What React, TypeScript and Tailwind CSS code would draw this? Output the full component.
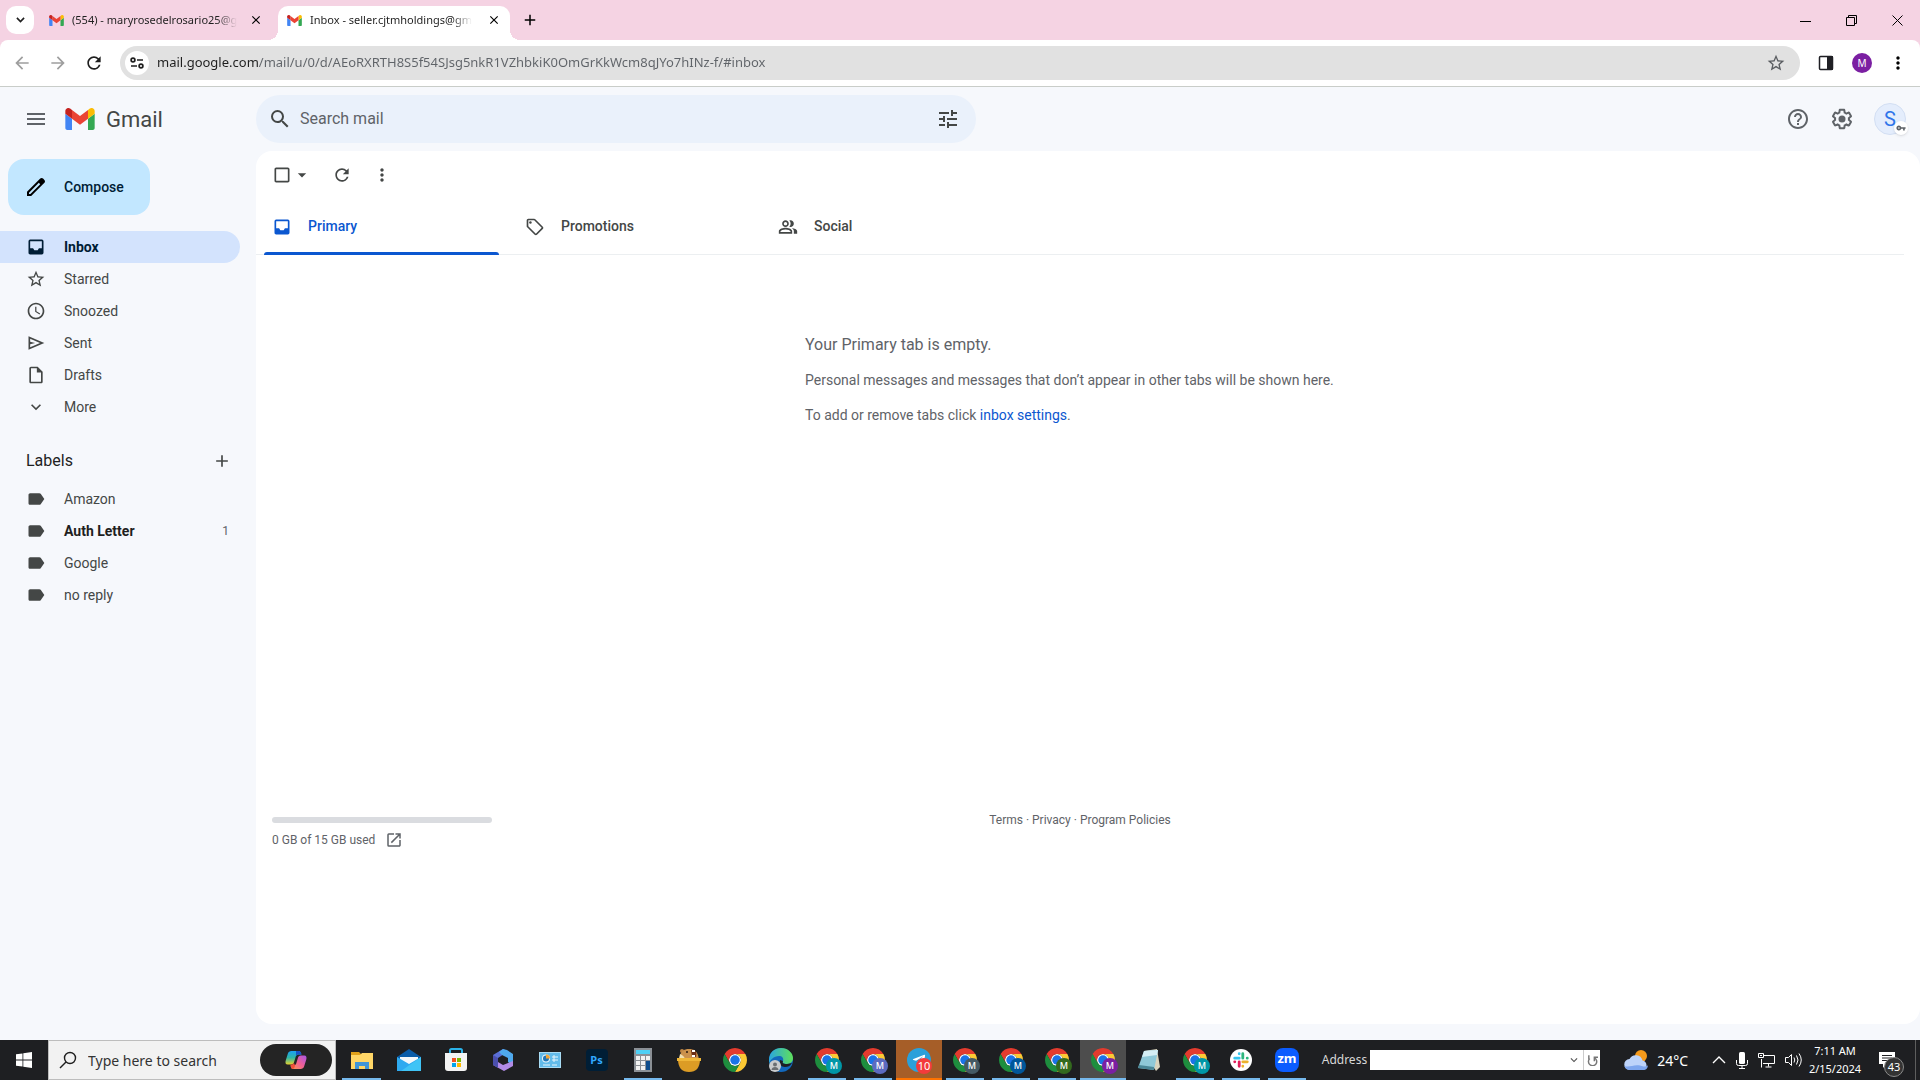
import React from "react";
import {
  MdAccessTime,
  MdAdd,
  MdArrowBack,
  MdArrowDropDown,
  MdArrowForward,
  MdCheckBoxOutlineBlank,
  MdClose,
  MdExpandMore,
  MdHelpOutline,
  MdLabel,
  MdMenu,
  MdMoreVert,
  MdOpenInNew,
  MdOutlineInsertDriveFile,
  MdOutlineLocalOffer,
  MdOutlinePeopleAlt,
  MdRefresh,
  MdSearch,
  MdStarBorder,
  MdTune,
  MdVpnKey,
} from "react-icons/md";
import { FaTelegramPlane } from "react-icons/fa";

function InboxIcon({ className }: { className: string }) {
  return (
    <svg viewBox="0 0 24 24" className={className} fill="currentColor" aria-hidden="true">
      <path d="M19 3H5a2 2 0 0 0-2 2v14c0 1.100.9 2 2 2h14a2 2 0 0 0 2-2V5a2 2 0 0 0-2-2zm0 10.500h-3.500L14 16h-4l-1.500-2.500H5V5h14z" />
    </svg>
  );
}

function SendIcon({ className }: { className: string }) {
  return (
    <svg viewBox="0 0 24 24" className={className} fill="currentColor" aria-hidden="true">
      <path d="M3 20V4l19 8-19 8zm2-3 11.850-5L5 7v3.500l6 1.500-6 1.500V17z" />
    </svg>
  );
}

const NAV = [
  { name: "Starred", icon: MdStarBorder },
  { name: "Snoozed", icon: MdAccessTime },
  { name: "Sent", icon: SendIcon },
  { name: "Drafts", icon: MdOutlineInsertDriveFile },
  { name: "More", icon: MdExpandMore },
];

const LABELS = [
  { name: "Amazon", count: 0 },
  { name: "Auth Letter", count: 1 },
  { name: "Google", count: 0 },
  { name: "no reply", count: 0 },
];

function GmailLogo({ className }: { className: string }) {
  return (
    <svg viewBox="52 42 88 66" className={className} aria-hidden="true">
      <path fill="#4285f4" d="M58 108h14V74L52 59v43c0 3.32 2.69 6 6 6" />
      <path fill="#34a853" d="M120 108h14c3.32 0 6-2.69 6-6V59l-20 15" />
      <path fill="#fbbc04" d="M120 48v26l20-15v-8c0-7.42-8.47-11.65-14.4-7.2" />
      <path fill="#ea4335" d="M72 74V48l24 18 24-18v26L96 92" />
      <path fill="#c5221f" d="M52 51v8l20 15V48l-5.6-4.2c-5.94-4.45-14.4-.22-14.4 7.2" />
    </svg>
  );
}

function ChromeLogo() {
  return (
    <svg viewBox="0 0 48 48" className="size-6" aria-hidden="true">
      <circle cx="24" cy="24" r="12" fill="#fff" />
      <path fill="#e33b2e" d="M24 12h20.78a24 24 0 0 0-41.56 0L13.61 30A11.99 11.99 0 0 1 24 12Z" />
      <path fill="#fcc934" d="M34.39 30 24 48a24 24 0 0 0 20.78-36H24a11.99 11.99 0 0 1 10.39 18Z" />
      <path fill="#1e8e3e" d="M13.61 30 3.22 12A24 24 0 0 0 24 48l10.39-18a11.99 11.99 0 0 1-20.78 0Z" />
      <circle cx="24" cy="24" r="9.5" fill="#1a73e8" />
    </svg>
  );
}

function ChromeProfile({ color }: { color: string }) {
  return (
    <span className="relative">
      <ChromeLogo />
      <span className={`absolute left-[11px] top-[10px] flex size-4 items-center justify-center rounded-full text-[9px] font-medium text-white ${color}`}>
        M
      </span>
    </span>
  );
}

function BrowserTab({ title, active }: { title: string; active?: boolean }) {
  return (
    <div className={`relative flex h-[34px] w-[232px] items-center rounded-t-[10px] pb-[6px] pl-[9px] pr-2 ${active ? "bg-white" : ""}`}>
      {active && (
        <>
          <span className="absolute -left-[10px] bottom-0 size-[10px] bg-[radial-gradient(circle_at_0_0,transparent_10px,white_10px)]" />
          <span className="absolute -right-[10px] bottom-0 size-[10px] bg-[radial-gradient(circle_at_100%_0,transparent_10px,white_10px)]" />
        </>
      )}
      <button className="flex min-w-0 flex-1 items-center">
        <GmailLogo className="h-[11px] w-[15px] shrink-0" />
        <span className="ml-2 whitespace-nowrap text-[11px] text-[#1f1f1f] [mask-image:linear-gradient(to_right,black_88%,transparent)]">
          {title}
        </span>
      </button>
      <button aria-label="Close tab" className="flex size-4 items-center justify-center">
        <MdClose className="size-[14px]" />
      </button>
    </div>
  );
}

function BrowserChrome() {
  return (
    <header className="bg-[#f5d3e3] font-['Noto_Sans','Segoe_UI',sans-serif]">
      <div className="flex h-10 items-end">
        <button aria-label="Search tabs" className="mb-[6px] ml-[6px] flex size-7 items-center justify-center rounded-[10px] bg-white">
          <svg viewBox="0 0 10 6" className="w-[9px]" fill="none" stroke="#1f1f1f" strokeWidth="1.8">
            <path d="m1 1 4 4 4-4" />
          </svg>
        </button>
        <div className="ml-[6px] flex">
          <BrowserTab title="(554) - maryrosedelrosario25@g" />
          <span className="w-[6px]" />
          <BrowserTab title="Inbox - seller.cjtmholdings@gm" active />
        </div>
        <button aria-label="New tab" className="mb-[11px] ml-[11px]">
          <MdAdd className="size-[18px]" />
        </button>
        <div className="mb-[14px] ml-auto mr-[17px] flex items-center gap-[35px] text-black">
          <button aria-label="Minimize">
            <svg viewBox="0 0 11 11" className="size-[11px]" stroke="currentColor"><path d="M0 6.5h11" /></svg>
          </button>
          <button aria-label="Restore">
            <svg viewBox="0 0 11 11" className="size-[11px]" fill="none" stroke="currentColor">
              <path d="M.5 2.5h8v8h-8zM2.5 2.500v-2h8v8h-2" />
            </svg>
          </button>
          <button aria-label="Close">
            <svg viewBox="0 0 11 11" className="size-[11px]" stroke="currentColor"><path d="m.5.5 10 10M10.500.5l-10 10" /></svg>
          </button>
        </div>
      </div>
      <div className="flex h-[47px] items-center rounded-t-lg border-b border-[#c9cdc9] bg-white pl-3">
        <button aria-label="Back" className="w-9 text-[#9e9e9e]"><MdArrowBack className="size-5" /></button>
        <button aria-label="Forward" className="w-9 text-[#9e9e9e]"><MdArrowForward className="size-5" /></button>
        <button aria-label="Reload" className="w-9 text-[#1f1f1f]"><MdRefresh className="size-5" /></button>
        <div className="flex h-[34px] flex-1 items-center rounded-full bg-[#e1e1e1] pl-[5px] pr-[14px]">
          <button aria-label="View site information" className="flex size-6 items-center justify-center rounded-full bg-white">
            <svg viewBox="0 0 14 12" className="w-[14px]" fill="none" stroke="#1f1f1f" strokeWidth="1.7">
              <circle cx="3" cy="3" r="1.900" />
              <path d="M7 3h6M1 9h6" />
              <circle cx="11" cy="9" r="1.900" />
            </svg>
          </button>
          <input
            aria-label="Address bar"
            defaultValue="mail.google.com/mail/u/0/d/AEoRXRTH8S5f54SJsg5nkR1VZhbkiK0OmGrKkWcm8qJYo7hINz-f/#inbox"
            className="ml-2 flex-1 bg-[linear-gradient(to_right,#1f1f1f_101px,#5f6368_101px)] bg-clip-text text-[13px] text-transparent outline-none"
          />
          <button aria-label="Bookmark this tab" className="text-[#5a5d61]"><MdStarBorder className="size-5" /></button>
        </div>
        <button aria-label="Side panel" className="ml-[18px]">
          <svg viewBox="0 0 16 16" className="size-4">
            <rect x="1.500" y="1.500" width="13" height="13" rx="1" fill="none" stroke="#1f1f24" strokeWidth="1.500" />
            <path d="M9 1h6v14H9z" fill="#1f1f24" />
          </svg>
        </button>
        <button aria-label="Profile" className="ml-[18px] flex size-5 items-center justify-center rounded-full bg-[#7b1fa2] text-[10px] text-white">M</button>
        <button aria-label="Browser menu" className="ml-[16px] mr-3"><MdMoreVert className="size-5" /></button>
      </div>
    </header>
  );
}

function GmailHeader() {
  return (
    <div className="flex h-16 items-center">
      <div className="flex w-64 items-center pl-6 text-[#5f6368]">
        <button aria-label="Main menu"><MdMenu className="size-6" /></button>
        <a href="#inbox" className="ml-[17px] flex items-center">
          <GmailLogo className="h-[22px] w-[30px]" />
          <span className="ml-[11px] text-[22px] text-[#444746]">Gmail</span>
        </a>
      </div>
      <form className="flex h-12 w-[720px] items-center rounded-full bg-[#eaf1fb] px-3 text-[#444746]">
        <button type="button" aria-label="Search"><MdSearch className="size-6" /></button>
        <input
          aria-label="Search mail"
          placeholder="Search mail"
          className="ml-2 flex-1 bg-transparent text-[16px] outline-none placeholder:text-[#5f6368]"
        />
        <button type="button" aria-label="Show search options" className="mr-1"><MdTune className="size-6" /></button>
      </form>
      <div className="ml-auto mr-[14px] flex items-center text-[#5f6368]">
        <button aria-label="Support" className="mr-5"><MdHelpOutline className="size-6" /></button>
        <button aria-label="Settings" className="mr-5">
          <svg viewBox="0 0 24 24" className="size-6" fill="currentColor">
            <path d="M13.85 22.25h-3.7c-.74 0-1.36-.54-1.45-1.27l-.27-1.89c-.27-.14-.53-.29-.79-.46l-1.8.72c-.7.26-1.47-.03-1.81-.65L2.2 15.53c-.35-.66-.2-1.44.36-1.88l1.53-1.19c-.01-.15-.02-.3-.02-.46 0-.15.01-.31.02-.46l-1.52-1.19c-.59-.45-.74-1.26-.37-1.88l1.85-3.19c.34-.62 1.11-.9 1.79-.63l1.81.73c.26-.17.52-.32.78-.46l.27-1.91c.09-.7.71-1.25 1.44-1.25h3.7c.74 0 1.36.54 1.45 1.27l.27 1.89c.27.14.53.29.79.46l1.8-.72c.71-.26 1.48.03 1.82.65l1.84 3.18c.36.66.2 1.44-.36 1.88l-1.52 1.19c.01.15.02.3.02.46s-.01.31-.02.46l1.52 1.19c.56.45.72 1.23.37 1.86l-1.86 3.22c-.34.62-1.11.9-1.8.63l-1.8-.72c-.26.17-.52.32-.78.46l-.27 1.91c-.1.68-.72 1.22-1.46 1.22zm-3.23-2h2.76l.37-2.55.53-.22c.44-.18.88-.44 1.34-.78l.45-.34 2.38.96 1.38-2.4-2.03-1.58.07-.56c.03-.26.06-.51.06-.78s-.03-.53-.06-.78l-.07-.56 2.03-1.58-1.39-2.4-2.39.96-.45-.35c-.42-.32-.87-.58-1.33-.77l-.52-.22-.37-2.55h-2.76l-.37 2.55-.53.21c-.44.19-.88.44-1.34.79l-.45.33-2.38-.95-1.39 2.39 2.03 1.58-.07.56a7 7 0 0 0-.06.79c0 .26.02.53.06.78l.07.56-2.03 1.58 1.38 2.4 2.39-.96.45.35c.43.33.86.58 1.33.77l.53.22.38 2.55z" />
            <circle cx="12" cy="12" r="3.500" />
          </svg>
        </button>
        <button aria-label="Account" className="relative flex size-8 items-center justify-center rounded-full border border-[#d3dff3] bg-[#e4edfc] text-[20px] text-[#2f75ea]">
          S
          <span className="absolute left-[19px] top-[17px] flex size-[14px] items-center justify-center rounded-full bg-white text-[#5f6368] shadow">
            <MdVpnKey className="size-[10px]" />
          </span>
        </button>
      </div>
    </div>
  );
}

function Sidebar() {
  return (
    <aside className="w-64 shrink-0 pt-2 text-[14px] text-[#444746]">
      <button className="ml-2 flex h-14 w-[142px] items-center rounded-2xl bg-[#c2e7ff] pl-4 font-medium text-[#001d35]">
        <svg viewBox="0 0 24 24" className="size-6" fill="black">
          <path d="M20.410 4.940l-1.350-1.350c-.78-.78-2.050-.78-2.830 0L3 16.820V21h4.180L20.410 7.770c.79-.78.79-2.050 0-2.830zm-14 14.120L5 19v-1.360l9.820-9.820 1.410 1.410-9.820 9.830z" />
        </svg>
        <span className="ml-4">Compose</span>
      </button>
      <nav className="mt-4 mr-4">
        <a href="#inbox" className="flex h-8 items-center rounded-r-full bg-[#d3e3fd] pl-[26px] font-bold text-[#001d35]">
          <InboxIcon className="size-5" />
          <span className="ml-[18px]">Inbox</span>
        </a>
        {NAV.map(({ name, icon: Icon }) => (
          <a key={name} href={`#${name.toLowerCase()}`} className="flex h-8 items-center pl-[26px]">
            <Icon className="size-5" />
            <span className="ml-[18px]">{name}</span>
          </a>
        ))}
      </nav>
      <div className="mt-4 flex h-11 items-center justify-between pl-[26px] pr-6">
        <h2 className="text-[16px] text-[#1f1f1f]">Labels</h2>
        <button aria-label="Create new label"><MdAdd className="size-5" /></button>
      </div>
      <nav className="mr-4">
        {LABELS.map(({ name, count }) => (
          <a
            key={name}
            href={`#label/${name}`}
            className={`flex h-8 items-center pl-[26px] pr-[11px] ${count ? "font-bold text-[#1f1f1f]" : ""}`}
          >
            <MdLabel className="size-5 text-[#444746]" />
            <span className="ml-[18px]">{name}</span>
            {count > 0 && <span className="ml-auto text-[12px] font-normal text-[#5f6368]">{count}</span>}
          </a>
        ))}
      </nav>
    </aside>
  );
}

function MailPanel() {
  return (
    <main className="flex-1 rounded-2xl bg-white text-[14px] text-[#5f6368]">
      <div className="flex h-12 items-center pl-4 text-[#444746]">
        <button aria-label="Select" className="flex items-center">
          <MdCheckBoxOutlineBlank className="size-5" />
          <MdArrowDropDown className="size-5" />
        </button>
        <button aria-label="Refresh" className="ml-5"><MdRefresh className="size-5" /></button>
        <button aria-label="More" className="ml-5"><MdMoreVert className="size-5" /></button>
      </div>
      <div role="tablist" className="mr-4 flex h-14 border-b border-[#eceff1] pl-2 font-medium text-[#444746]">
        <button role="tab" aria-selected="true" className="relative flex w-[253px] items-center pl-2 text-[#0b57d0]">
          <InboxIcon className="size-5" />
          <span className="ml-4">Primary</span>
          <span className="absolute -bottom-px left-0 h-[3px] w-[235px] rounded-t bg-[#0b57d0]" />
        </button>
        <button role="tab" className="flex w-[253px] items-center pl-2">
          <MdOutlineLocalOffer className="size-5" />
          <span className="ml-4">Promotions</span>
        </button>
        <button role="tab" className="flex w-[253px] items-center pl-2">
          <MdOutlinePeopleAlt className="size-5" />
          <span className="ml-4">Social</span>
        </button>
      </div>
      <section className="mr-4 flex h-[561px] justify-center pt-[78px]">
        <div className="w-[550px]">
          <h2 className="text-[16px] leading-6">Your Primary tab is empty.</h2>
          <p className="mt-[13px] leading-5">Personal messages and messages that don’t appear in other tabs will be shown here.</p>
          <p className="mt-[15px] leading-5">
            To add or remove tabs click <a href="#settings" className="text-[#0b57d0]">inbox settings</a>.
          </p>
        </div>
      </section>
      <footer className="grid grid-cols-3 pl-4 pr-8 text-[12px] leading-4">
        <div>
          <div className="mt-[1px] h-[6px] w-[220px] rounded-full bg-[#dadce0]" />
          <div className="mt-[7px] flex h-5 items-center">
            0 GB of 15 GB used
            <a href="#storage" aria-label="Manage storage" className="ml-[10px]"><MdOpenInNew className="size-[18px]" /></a>
          </div>
        </div>
        <div className="-mt-1 text-center">
          <a href="#terms">Terms</a> · <a href="#privacy">Privacy</a> · <a href="#policies">Program Policies</a>
        </div>
      </footer>
    </main>
  );
}

function Task({ label, className = "w-[46px]", line = "", children }: { label: string; className?: string; line?: string; children: React.ReactNode }) {
  return (
    <button aria-label={label} className={`relative flex h-10 shrink-0 items-center justify-center ${className}`}>
      {children}
      {line && <span className={`absolute bottom-0 h-[2px] ${line}`} />}
    </button>
  );
}

const RUNNING = "inset-x-1 bg-[#76b9ed]";

function CopilotIcon() {
  return (
    <svg viewBox="0 0 24 22" className="h-5 w-[22px]">
      <defs>
        <linearGradient id="copA" x1="0" y1="0" x2="0" y2="1">
          <stop offset="0" stopColor="#1aa0f5" /><stop offset=".5" stopColor="#2fb5a5" /><stop offset="1" stopColor="#e8d22c" />
        </linearGradient>
        <linearGradient id="copB" x1="1" y1="0" x2="0" y2="1">
          <stop offset="0" stopColor="#a556e8" /><stop offset=".5" stopColor="#ef5f95" /><stop offset="1" stopColor="#fb9a4b" />
        </linearGradient>
      </defs>
      <path d="M7 1h8c2 0 2.500 2 3 4h-3c-2 0-3 1-3.500 3L10 13c-.5 2-1.500 3-3.500 3H3c-2.500 0-3-2-2.300-4.500L3 4c.6-2 2-3 4-3z" fill="url(#copA)" />
      <path d="M12 1h3c2 0 2.500 2 3 4h-3c-1.500 0-2.500.5-3 2z" fill="#1551c9" />
      <path d="M17 21H9c-2 0-2.500-2-3-4h3c2 0 3-1 3.500-3L14 9c.5-2 1.500-3 3.500-3H21c2.500 0 3 2 2.300 4.500L21 18c-.6 2-2 3-4 3z" fill="url(#copB)" />
      <path d="M6 16c2 0 3-.4 3.600-2L11 17c-.6 2-1 4-3 4-1.500-.5-1.800-2-2-5z" fill="#f2503b" />
    </svg>
  );
}

function Taskbar() {
  return (
    <footer className="flex h-10 items-center bg-[#1e1f22] font-['Noto_Sans','Segoe_UI',sans-serif] text-white">
      <Task label="Start" className="w-12">
        <svg viewBox="0 0 16 16" className="size-4" fill="white">
          <path d="M0 2.300 6.500 1.400v6.200H0zM7.300 1.300 16 0v7.600H7.300zM0 8.400h6.500v6.200L0 13.700zM7.300 8.400H16V16l-8.700-1.300z" />
        </svg>
      </Task>
      <div className="flex h-10 w-72 items-center border border-[#bdbdbd] bg-[#f2f2f2] pl-[10px] pr-[3px]">
        <svg viewBox="0 0 18 18" className="size-[18px]" fill="none" stroke="#1f1f1f" strokeWidth="1.400">
          <circle cx="11" cy="7" r="5.500" />
          <path d="m7 11-6 6" />
        </svg>
        <input
          aria-label="Type here to search"
          placeholder="Type here to search"
          className="ml-[11px] w-[160px] bg-transparent text-[14px] outline-none placeholder:text-[#333333]"
        />
        <button aria-label="Copilot" className="ml-auto flex h-8 w-[72px] items-center justify-center rounded-full bg-[#242424]"><CopilotIcon /></button>
      </div>
      <div className="ml-[2px] flex">
        <Task label="File Explorer" className="w-[47px]" line={RUNNING}>
          <svg viewBox="0 0 22 18" className="w-[22px]">
            <path d="M0 1h8l2 2v3H0z" fill="#e0a11b" />
            <path d="M0 4h9l2-2h11v16H0z" fill="#ffd667" />
            <path d="M4 18v-7h14v7h-4v-3H8v3z" fill="#3f95d8" />
          </svg>
        </Task>
        <Task label="Mail" className="w-[47px]">
          <svg viewBox="0 0 24 22" className="w-6">
            <path d="M0 8 12 0l12 8v4H0z" fill="#0a5ca8" />
            <path d="M3 8h18v8H3z" fill="#f4f8fb" />
            <path d="m0 8 12 7 12-7v14H0z" fill="#2eaaf0" />
            <path d="m24 8-20 14h20z" fill="#40c4f6" />
          </svg>
        </Task>
        <Task label="Microsoft Store" className="w-[47px]">
          <svg viewBox="0 0 24 24" className="w-6">
            <path d="M6 6V2.500C6 1.500 6.500 1 7.500 1h9c1 0 1.500.5 1.500 1.500V6" fill="none" stroke="#2bb3ea" strokeWidth="2" />
            <path d="M1 5h22v15a3 3 0 0 1-3 3H4a3 3 0 0 1-3-3z" fill="#f3f3f3" />
            <path d="M8 10h4v4H8z" fill="#f25022" /><path d="M13 10h4v4h-4z" fill="#7fba00" />
            <path d="M8 15h4v4H8z" fill="#00a4ef" /><path d="M13 15h4v4h-4z" fill="#ffb900" />
          </svg>
        </Task>
        <Task label="Microsoft 365" className="w-[47px]">
          <svg viewBox="0 0 20 22" className="w-5">
            <path d="M10 0 0 6v10l5-3V9l6-4 3-3z" fill="#5b6fd6" />
            <path d="m10 0 4 1 6 4v12l-5-4V9L9 6 6 3z" fill="#4fa9ee" />
            <path d="M0 16l5-3 5 3 10-4v5l-9 5z" fill="#b18be6" />
            <path d="M0 6v10l5 3V9z" fill="#4b4fae" />
          </svg>
        </Task>
        <Task label="Control Panel" className="w-[47px]">
          <svg viewBox="0 0 22 16" className="w-[22px]">
            <path d="M0 0h22v16H0z" fill="#a9dcf5" />
            <path d="M1 1h20v14H1z" fill="#63bbea" />
            <circle cx="7" cy="6.500" r="4" fill="#e9f5fb" /><circle cx="7" cy="6.500" r="3" fill="#2277b8" /><path d="M7 6.500v-4a4 4 0 0 1 4 4z" fill="#f0a63a" />
            <path d="M13 5h6M13 8h6M15 3v7M4 13h7M13 13h5" stroke="#e9f5fb" strokeWidth="1" />
          </svg>
        </Task>
        <Task label="Photoshop" className="w-[47px]">
          <span className="flex size-[22px] items-center justify-center rounded bg-[#001e36] text-[11px] font-bold text-[#31a8ff]">Ps</span>
        </Task>
        <Task label="Calculator" line={RUNNING}>
          <svg viewBox="0 0 18 24" className="w-[18px]">
            <path d="M0 0h18v24H0z" fill="#8b9096" />
            <path d="M2 2h14v4H2z" fill="#4fd0f5" />
            <path d="M2 8h4v4H2zM7 8h4v4H7zM12 8h4v4h-4zM2 13h4v4H2zM7 13h4v4H7zM2 18h4v4H2zM7 18h4v4H7z" fill="#f2f2f2" />
            <path d="M12 13h4v9h-4z" fill="#0e4c8c" />
          </svg>
        </Task>
        <Task label="Game">
          <svg viewBox="0 0 24 24" className="size-6">
            <circle cx="5" cy="3" r="2" fill="#c08644" />
            <path d="M2 12C3 3 7 1 12 1s9 2 10 11z" fill="#cb914c" />
            <path d="M3 6c2 1 4 2 5 5H2z" fill="#f1dfae" />
            <path d="M14 2c5-1 6 3 5 7h-4z" fill="#6a2c16" /><path d="M15 2h3v2h-3zM15 7h3v2h-3z" fill="#fff" />
            <circle cx="10" cy="4" r="1" fill="#2b1a0e" />
            <path d="M1 11h22c0 9-4 13-11 13S1 20 1 11z" fill="#dc9c25" />
            <path d="M0 10h24v3H0z" fill="#efb638" />
          </svg>
        </Task>
        <Task label="Chrome"><ChromeLogo /></Task>
        <Task label="Edge">
          <svg viewBox="0 0 24 24" className="size-6">
            <defs>
              <linearGradient id="edgeTop" x1="0" x2="1">
                <stop offset="0" stopColor="#2aa5e0" /><stop offset="1" stopColor="#5fe05a" />
              </linearGradient>
            </defs>
            <circle cx="12" cy="12" r="12" fill="#1268bd" />
            <path d="M0 12C0 4 6 0 12 0c7 0 12 5 12 10 0 4-3 6-6 6-4 0-5-1-4-3 1-3-1-5-4-5-5 0-10 4-10 9z" fill="url(#edgeTop)" />
            <path d="M14 13c-1 2 0 3 4 3l5-1c-2 3-4 4-7 4-4 0-6-3-5-7z" fill="#1e1f22" />
            <circle cx="6" cy="18" r="6" fill="#c9cbcd" />
            <circle cx="6" cy="16.500" r="2" fill="#6b6e72" />
            <path d="M2.500 22c0-4 7-4 7 0z" fill="#6b6e72" />
          </svg>
        </Task>
        <Task label="Chrome profile 1" line={RUNNING}><ChromeProfile color="bg-[#0097a7]" /></Task>
        <Task label="Chrome profile 2" line={RUNNING}><ChromeProfile color="bg-[#5c6bc0]" /></Task>
        <Task label="Telegram" className="w-[46px] bg-[#a65e28]" line="inset-x-0 bg-[#ff7300]">
          <span className="relative flex size-6 items-center justify-center rounded-full bg-[#2ba0da]">
            <FaTelegramPlane className="size-[14px]" />
            <span className="absolute left-[9px] top-[10px] flex size-4 items-center justify-center rounded-full bg-[#f33b3b] text-[11px]">10</span>
          </span>
        </Task>
        <Task label="Chrome profile 3" line={RUNNING}><ChromeProfile color="bg-[#455a64]" /></Task>
        <Task label="Chrome profile 4" line={RUNNING}><ChromeProfile color="bg-[#01579b]" /></Task>
        <Task label="Chrome profile 5" line={RUNNING}><ChromeProfile color="bg-[#33691e]" /></Task>
        <Task label="Chrome profile 6" className="w-[46px] bg-[#4d4d4d]" line="inset-x-0 bg-[#76b9ed]"><ChromeProfile color="bg-[#7b1fa2]" /></Task>
        <Task label="Notepad">
          <svg viewBox="0 0 24 22" className="w-6">
            <path d="M7 2 20 0l3 18-4 4z" fill="#d8d3bd" />
            <path d="M7 2 21 1l-4 20L1 19z" fill="#8fc9d8" />
            <path d="M7 2 21 1l-1 5L5 8z" fill="#d5eef4" />
            <path d="m1 19 16 2v-3L2 16z" fill="#4a8797" />
          </svg>
        </Task>
        <Task label="Chrome profile 7" line={RUNNING}><ChromeProfile color="bg-[#0097a7]" /></Task>
        <Task label="Slack" line={RUNNING}>
          <svg viewBox="0 0 22 22" className="size-[22px]">
            <circle cx="11" cy="11" r="11" fill="#fff" />
            <g strokeWidth="2.800" strokeLinecap="round">
              <path d="M9.200 4.700v.1M4.700 9.200h4.500" stroke="#36c5f0" />
              <path d="M12.800 4.700v4.500M17.200 9.200h.1" stroke="#2eb67d" />
              <path d="M12.800 12.800h4.500M12.800 17.200v.1" stroke="#ecb22e" />
              <path d="M9.200 12.800v4.500M4.700 12.800h.1" stroke="#e01e5a" />
            </g>
          </svg>
        </Task>
        <Task label="Zoom" line={RUNNING}>
          <span className="flex size-6 items-center justify-center rounded-lg bg-[#0b5cff] pb-[2px] text-[13px] font-bold">zm</span>
        </Task>
      </div>
      <div className="ml-auto flex items-center">
        <label htmlFor="address" className="text-[12px] text-[#d8d8d8]">Address</label>
        <div className="ml-[3px] flex h-5 w-[230px] items-center bg-white text-[#555555]">
          <input id="address" className="min-w-0 flex-1 bg-transparent px-1 text-[12px] text-black outline-none" />
          <button aria-label="Address history"><MdExpandMore className="size-[14px]" /></button>
          <button aria-label="Go" className="ml-[2px] flex h-5 w-[17px] items-center justify-center border-l border-[#cccccc]">
            <svg viewBox="0 0 12 14" className="w-[11px]" fill="none" stroke="#777777" strokeWidth="1.600">
              <path d="M8 4.200a4.500 4.500 0 1 1-5 .800M2 1.500v4M8 8V3.500h4" />
            </svg>
          </button>
        </div>
        <button className="ml-6 flex items-center gap-2 text-[14px]">
          <svg viewBox="0 0 25 22" className="w-[25px]">
            <circle cx="17" cy="7" r="6" fill="#f59a1b" />
            <path d="M6 21a5.500 5.500 0 0 1-.5-11 7 7 0 0 1 13 1.500A5 5 0 0 1 19.500 21z" fill="#bdd3fa" />
            <path d="M6 21c-3 0-5-1.500-5.500-4 6 2 10-3 19 .500 2 0 3.500-.5 4.500-1-.5 3-2 4.500-4.500 4.500z" fill="#7ea6ee" />
          </svg>
          24°C
        </button>
        <div className="ml-6 flex items-center gap-[10px]">
          <button aria-label="Show hidden icons">
            <svg viewBox="0 0 14 8" className="w-[14px]" fill="none" stroke="white" strokeWidth="1.400"><path d="m1 7 6-6 6 6" /></svg>
          </button>
          <button aria-label="Microphone">
            <svg viewBox="0 0 12 17" className="w-3" fill="none" stroke="white">
              <rect x="3" y="0" width="6" height="12" rx="1.500" fill="white" stroke="none" />
              <path d="M.5 8v3.500q0 2 2 2h7q2 0 2-2V8M6 13.500v3M3 16.500h6" />
            </svg>
          </button>
          <button aria-label="Network">
            <svg viewBox="0 0 17 15" className="w-[17px]" fill="none" stroke="white">
              <path d="M5 2.500h11.500v8H5M3.500 6v8.500M.5.500h5v4h-5zM10.500 10.500v3M7.500 14h6M2 2.500h2" />
            </svg>
          </button>
          <button aria-label="Volume">
            <svg viewBox="0 0 18 14" className="w-[18px]" fill="none" stroke="white">
              <path d="M.5 4.500h3l3-3v11l-3-3h-3zM9 4.500q1.500 2.500 0 5M11.500 2.500q3 4.500 0 9M14 .500q4.500 6.500 0 13" />
            </svg>
          </button>
        </div>
        <div className="ml-1 w-[56px] text-center text-[11px] leading-[18px]">
          <div className="whitespace-nowrap">7:11 AM</div>
          <div className="whitespace-nowrap">2/15/2024</div>
        </div>
        <button aria-label="Notifications" className="relative ml-4 mr-5">
          <svg viewBox="0 0 16 16" className="size-4"><path d="M0 0h16v12H7l-3 4v-4H0z" fill="white" /><path d="M3 3.500h10M3 6h10M3 8.500h7" stroke="#1e1f22" /></svg>
          <span className="absolute left-[5px] top-[5px] flex size-5 items-center justify-center rounded-full border border-[#8a8a8a] bg-[#333333] text-[11px]">43</span>
        </button>
        <span className="mr-1 h-10 w-px bg-[#5e5e5e]" />
      </div>
    </footer>
  );
}

export default function App() {
  return (
    <div className="flex min-h-screen flex-col bg-[#f6f8fc]">
      <BrowserChrome />
      <div className="flex flex-1 flex-col pb-4 font-[Roboto,'Google_Sans',sans-serif]">
        <GmailHeader />
        <div className="flex flex-1">
          <Sidebar />
          <MailPanel />
        </div>
      </div>
      <Taskbar />
    </div>
  );
}
